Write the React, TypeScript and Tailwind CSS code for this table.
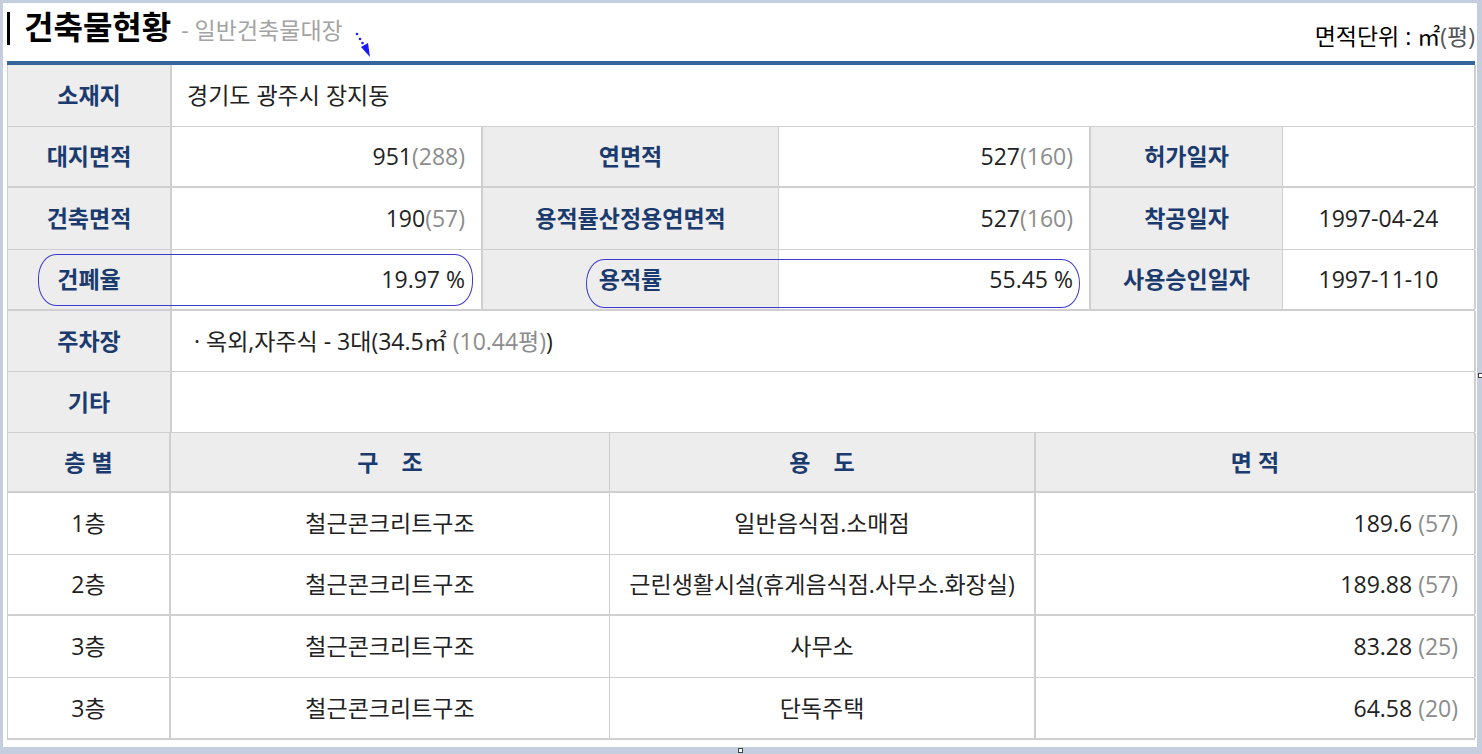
import React from "react";

const LBL = "bg-[#ededed] text-[#1b3b6f] font-bold flex items-center justify-center";
const VAL = "bg-white text-[#222] flex items-center";

function Gray({ children }: { children: React.ReactNode }) {
  return <span className="text-[#8c8c8c]">{children}</span>;
}

export default function App() {
  return (
    <div className="relative w-[1482px] h-[754px] overflow-hidden bg-[#c4cede] pt-[3px] pl-[3px] pr-[5px] pb-[7px] font-['Open_Sans','Noto_Sans_CJK_KR',sans-serif] text-[23px] leading-none">
      <div className="bg-white h-full pl-[4px] pr-[2px] flex flex-col">
        {/* header */}
        <div className="h-[58px] flex items-start justify-between">
          <div className="flex items-start">
            <div className="w-[3px] h-[33px] bg-black mt-[9px]" />
            <div className="flex items-baseline ml-[14px] mt-[6px]">
              <span className="text-[32px] font-bold text-black leading-[36px]">건축물현황</span>
              <span className="ml-[10px] text-[#a3a3a3] text-[23px]">- 일반건축물대장</span>
              <svg width="20" height="30" viewBox="0 0 20 30" className="ml-[11px] self-start mt-[21px]">
                <circle cx="3" cy="4" r="1.3" fill="#1a1aff" />
                <circle cx="6" cy="9" r="1.3" fill="#1a1aff" />
                <circle cx="8.5" cy="13" r="1.3" fill="#1a1aff" />
                <polygon points="7,17 14,13 16,27" fill="#1a1aff" />
              </svg>
            </div>
          </div>
          <div className="mt-[20px] text-[23px] text-black leading-[26px]">
            면적단위 : ㎡<span className="text-[#555]">(평)</span>
          </div>
        </div>
        <div className="h-[4px] bg-[#35659a]" />

        {/* top section */}
        <div className="border-l border-[#cfcfcf]">
          <div className="grid grid-cols-[164px_1304px] h-[62px] border-b border-[#cfcfcf]">
            <div className={`${LBL} border-r-2 border-[#cfcfcf]`}>소재지</div>
            <div className={`${VAL} pl-[15px] border-r-2 border-[#cfcfcf]`}>경기도 광주시 장지동</div>
          </div>

          <Row6
            h="h-[61px]"
            b="border-b-2"
            cells={[
              "대지면적",
              <>951<Gray>(288)</Gray></>,
              "연면적",
              <>527<Gray>(160)</Gray></>,
              "허가일자",
              "",
            ]}
          />
          <Row6
            h="h-[62px]"
            b="border-b"
            cells={[
              "건축면적",
              <>190<Gray>(57)</Gray></>,
              "용적률산정용연면적",
              <>527<Gray>(160)</Gray></>,
              "착공일자",
              "1997-04-24",
            ]}
          />
          <Row6
            h="h-[61px]"
            b="border-b-2"
            cells={["건폐율", "19.97 %", "용적률", "55.45 %", "사용승인일자", "1997-11-10"]}
          />

          <div className="grid grid-cols-[164px_1304px] h-[61px] border-b border-[#cfcfcf]">
            <div className={`${LBL} border-r-2 border-[#cfcfcf]`}>주차장</div>
            <div className={`${VAL} pl-[22px] border-r-2 border-[#cfcfcf]`}>
              · 옥외,자주식 - 3대(34.5㎡ <Gray>&nbsp;(10.44평)</Gray>)
            </div>
          </div>
          <div className="grid grid-cols-[164px_1304px] h-[61px] border-b border-[#cfcfcf]">
            <div className={`${LBL} border-r-2 border-[#cfcfcf]`}>기타</div>
            <div className={`${VAL} border-r-2 border-[#cfcfcf]`} />
          </div>

          {/* floor table header */}
          <div className="grid grid-cols-[163px_439px_426px_440px] h-[60px] border-b-2 border-[#cfcfcf]">
            <div className={`${LBL} border-r-2 border-[#cfcfcf]`}>층 별</div>
            <div className={`${LBL} border-r border-[#cfcfcf]`}>구　조</div>
            <div className={`${LBL} border-r-2 border-[#cfcfcf]`}>용　도</div>
            <div className={`${LBL} border-r-2 border-[#cfcfcf]`}>면 적</div>
          </div>
          <Floor h="h-[62px]" b="border-b" f="1층" s="철근콘크리트구조" u="일반음식점.소매점" a="189.6" p="(57)" />
          <Floor h="h-[61px]" b="border-b-2" f="2층" s="철근콘크리트구조" u="근린생활시설(휴게음식점.사무소.화장실)" a="189.88" p="(57)" />
          <Floor h="h-[62px]" b="border-b" f="3층" s="철근콘크리트구조" u="사무소" a="83.28" p="(25)" />
          <Floor h="h-[62px]" b="border-b-2" f="3층" s="철근콘크리트구조" u="단독주택" a="64.58" p="(20)" />
        </div>
      </div>

      {/* ellipse annotations */}
      <div className="absolute left-[38px] top-[254px] w-[435px] h-[52px] border border-[#3b3bd0] rounded-[18px/24px]" />
      <div className="absolute left-[586px] top-[259px] w-[494px] h-[49px] border border-[#3b3bd0] rounded-[18px/24px]" />

      {/* resize handles */}
      <div className="absolute left-[1478px] top-[373px] w-[5px] h-[5px] bg-white border border-[#444]" />
      <div className="absolute left-[738px] top-[748px] w-[5px] h-[5px] bg-white border border-[#444]" />
    </div>
  );
}

function Row6({ h, b, cells }: { h: string; b: string; cells: React.ReactNode[] }) {
  return (
    <div className={`grid grid-cols-[164px_311px_296px_312px_192px_193px] ${h} ${b} border-[#cfcfcf]`}>
      <div className={`${LBL} border-r-2 border-[#cfcfcf]`}>{cells[0]}</div>
      <div className={`${VAL} justify-end pr-[16px] border-r-2 border-[#cfcfcf]`}>{cells[1]}</div>
      <div className={`${LBL} border-r border-[#cfcfcf]`}>{cells[2]}</div>
      <div className={`${VAL} justify-end pr-[16px] border-r-2 border-[#cfcfcf]`}>{cells[3]}</div>
      <div className={`${LBL} border-r border-[#cfcfcf]`}>{cells[4]}</div>
      <div className={`${VAL} justify-center border-r-2 border-[#cfcfcf]`}>{cells[5]}</div>
    </div>
  );
}

function Floor({ h, b, f, s, u, a, p }: { h: string; b: string; f: string; s: string; u: string; a: string; p: string }) {
  return (
    <div className={`grid grid-cols-[163px_439px_426px_440px] ${h} ${b} border-[#cfcfcf]`}>
      <div className={`${VAL} justify-center border-r-2 border-[#cfcfcf]`}>{f}</div>
      <div className={`${VAL} justify-center border-r border-[#cfcfcf]`}>{s}</div>
      <div className={`${VAL} justify-center border-r-2 border-[#cfcfcf]`}>{u}</div>
      <div className={`${VAL} justify-end pr-[16px] border-r-2 border-[#cfcfcf]`}>
        {a}&nbsp;<Gray>{p}</Gray>
      </div>
    </div>
  );
}
